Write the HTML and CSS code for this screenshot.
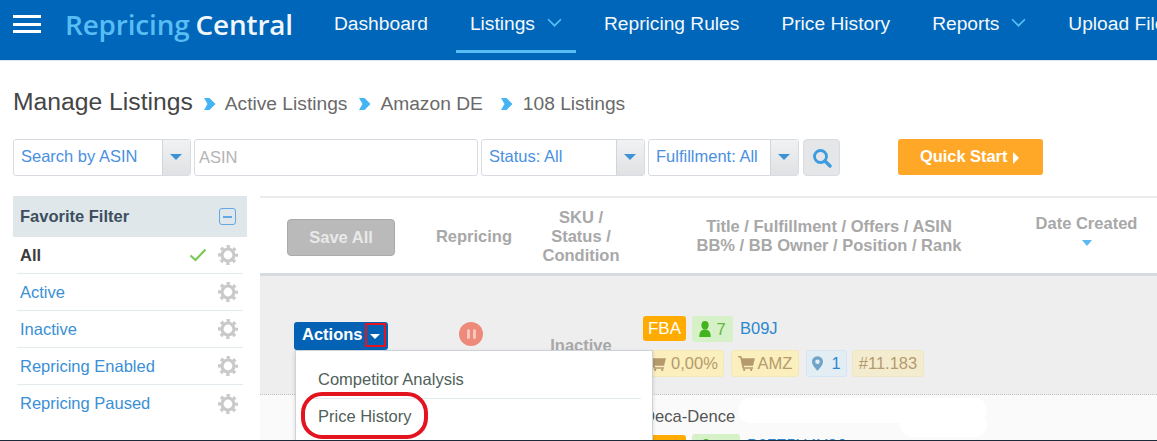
FILE: index.html
```html
<!DOCTYPE html>
<html lang="en">
<head>
<meta charset="utf-8">
<title>Manage Listings</title>
<link rel="stylesheet" href="styles.css">
</head>
<body>
<header class="topbar">
  <button class="burger" aria-label="Menu"><span></span><span></span><span></span></button>
  <div class="logo"><span class="logo-a">Repricing</span><span class="logo-b">Central</span></div>
  <nav class="nav">
    <a class="nav-item">Dashboard</a>
    <a class="nav-item active">Listings <svg class="chev" viewBox="0 0 14 9"><path d="M1 1l6 6 6-6" fill="none" stroke="#58bdf5" stroke-width="1.6"/></svg></a>
    <a class="nav-item">Repricing Rules</a>
    <a class="nav-item">Price History</a>
    <a class="nav-item">Reports <svg class="chev" viewBox="0 0 14 9"><path d="M1 1l6 6 6-6" fill="none" stroke="#58bdf5" stroke-width="1.6"/></svg></a>
    <a class="nav-item">Upload Files</a>
  </nav>
</header>

<section class="titlebar">
  <h1>Manage Listings</h1>
  <svg class="crumb" viewBox="0 0 12 12"><path d="M0.500 0h5.500l6 6-6 6H0.500l3.500-6z" fill="#45b4f5"/></svg><span>Active Listings</span>
  <svg class="crumb" viewBox="0 0 12 12"><path d="M0.500 0h5.500l6 6-6 6H0.500l3.500-6z" fill="#45b4f5"/></svg><span>Amazon DE</span>
  <svg class="crumb" viewBox="0 0 12 12"><path d="M0.500 0h5.500l6 6-6 6H0.500l3.500-6z" fill="#45b4f5"/></svg><span>108 Listings</span>
</section>

<section class="filters">
  <div class="select w-asin"><span class="select-label">Search by ASIN</span><span class="select-arrow"></span></div>
  <div class="text-input">ASIN</div>
  <div class="select w-status"><span class="select-label">Status: All</span><span class="select-arrow"></span></div>
  <div class="select w-ful"><span class="select-label">Fulfillment: All</span><span class="select-arrow"></span></div>
  <button class="search-btn" aria-label="Search"><svg viewBox="0 0 20 20" width="20" height="20"><circle cx="8.500" cy="8.500" r="6" fill="none" stroke="#3d9be0" stroke-width="2.800"/><path d="M13 13l5 5" stroke="#3d9be0" stroke-width="3.400" stroke-linecap="round"/></svg></button>
  <button class="quick">Quick Start <span class="tri"></span></button>
</section>

<main class="content">
  <aside class="side">
    <div class="side-head"><span>Favorite Filter</span><span class="collapse"><i></i></span></div>
    <ul class="side-list">
      <li class="current"><span class="side-name">All</span><svg class="check" viewBox="0 0 18 14"><path d="M1.500 7.500l5 4.500 10-10.500" fill="none" stroke="#7cc95a" stroke-width="2.200"/></svg><svg class="gear" viewBox="0 0 20 20"><use href="#gear"/></svg></li>
      <li><span class="side-name">Active</span><svg class="gear" viewBox="0 0 20 20"><use href="#gear"/></svg></li>
      <li><span class="side-name">Inactive</span><svg class="gear" viewBox="0 0 20 20"><use href="#gear"/></svg></li>
      <li><span class="side-name">Repricing Enabled</span><svg class="gear" viewBox="0 0 20 20"><use href="#gear"/></svg></li>
      <li><span class="side-name">Repricing Paused</span><svg class="gear" viewBox="0 0 20 20"><use href="#gear"/></svg></li>
    </ul>
  </aside>

  <section class="table">
    <div class="thead">
      <div class="th-save"><button class="save">Save All</button></div>
      <div class="th">Repricing</div>
      <div class="th">SKU /<br>Status /<br>Condition</div>
      <div class="th">Title / Fulfillment / Offers / ASIN<br>BB% / BB Owner / Position / Rank</div>
      <div class="th th-date">Date Created<span class="date-sort"></span></div>
    </div>

    <div class="row row-grey">
      <div class="cell-actions">
        <div class="actions"><span>Actions</span><span class="actions-caret"></span></div>
      </div>
      <div class="cell-pause"><span class="pause"><i></i><i></i></span></div>
      <div class="cell-status">Inactive</div>
      <div class="cell-info">
        <div class="badges">
          <span class="b b-fba">FBA</span>
          <span class="b b-green"><svg viewBox="0 0 12 16" width="12" height="16"><use href="#person"/></svg>7</span>
          <a class="asin">B09J</a>
        </div>
        <div class="badges second">
          <span class="b b-yellow b-bbp"><svg class="cart" viewBox="0 0 18 16"><use href="#cart"/></svg>0,00%</span>
          <span class="b b-yellow b-amz"><svg class="cart" viewBox="0 0 18 16"><use href="#cart"/></svg>AMZ</span>
          <span class="b b-blue"><svg viewBox="0 0 12 16" width="11" height="15"><path fill-rule="evenodd" d="M6 0a6 6 0 0 1 6 6c0 3.500-4 7.500-6 10C4 13.500 0 9.500 0 6a6 6 0 0 1 6-6zm0 3.500a2.500 2.500 0 1 0 0 5 2.500 2.500 0 0 0 0-5z" fill="#6fa3c7"/></svg>1</span>
          <span class="b b-rank">#11.183</span>
        </div>
      </div>
    </div>

    <div class="row row-white">
      <div class="cell-actions"></div>
      <div class="cell-pause"></div>
      <div class="cell-status"></div>
      <div class="cell-info">
        <div class="title-line">Deca-Dence<span class="blob"></span><span class="blob blob-low"></span></div>
        <div class="badges third">
          <span class="b b-fba b-fba-2">FBA</span>
          <span class="b b-green b-green-2"><svg viewBox="0 0 12 16" width="12" height="16"><use href="#person"/></svg></span>
          <a class="asin asin-cut">B07Z5H4Y3J</a>
        </div>
      </div>
    </div>

    <div class="menu">
      <a class="menu-item">Competitor Analysis</a>
      <a class="menu-item">Price History</a>
    </div>
    <span class="mark-rect"></span>
    <span class="mark-ring"></span>
  </section>
</main>

<svg class="defs" width="0" height="0" aria-hidden="true">
  <defs>
    <g id="gear" fill="none" stroke="#c9c9c9">
      <circle cx="10" cy="10" r="6" stroke-width="3.200"/>
      <circle cx="10" cy="10" r="8.500" stroke-width="3" stroke-dasharray="3.300 3.380" stroke-dashoffset="1.650"/>
    </g>
    <g id="cart" fill="#b59a6c">
      <path d="M0 0h3.500l.7 2.500H18l-2 8H6l.3 1.500H16v1.500H4.800L2.300 1.500H0z"/>
      <circle cx="6.500" cy="14.800" r="1.200"/><circle cx="14" cy="14.800" r="1.200"/>
    </g>
    <g id="person" fill="#41b31c">
      <ellipse cx="6" cy="4.200" rx="3.600" ry="4.200"/>
      <path d="M0.300 16c0-5.500 2-7.500 5.700-7.500s5.700 2 5.700 7.500z"/>
    </g>
  </defs>
</svg>
</body>
</html>
```
FILE: styles.css
```css
* { box-sizing: border-box; }
html, body { margin: 0; height: 441px; overflow: hidden; }
body { font-family: "Liberation Sans", Arial, sans-serif; color: #555; background: #fff; position: relative; }
body::after { content: ""; position: absolute; left: 0; right: 0; bottom: 0; height: 1px; background: #1d2a3a; z-index: 5; }
a { color: inherit; text-decoration: none; }
.defs { position: absolute; }

.topbar { height: 61px; background: #0066b9; display: flex; align-items: stretch; padding-left: 13px; white-space: nowrap; overflow: hidden; border-bottom: 1px solid #d8e8f5; }
.burger { width: 28px; height: 60px; padding: 15px 0 0; margin: 0; border: 0; background: none; display: flex; flex-direction: column; gap: 4.500px; flex: none; }
.burger span { display: block; width: 28px; height: 3px; background: #fff; }
.logo { width: 228px; margin-left: 24px; font-family: "Open Sans", sans-serif; font-size: 27.900px; font-weight: 600; line-height: 48px; flex: none; letter-spacing: -.15px; }
.logo-a { color: #58bdf5; margin-right: 6px; }
.logo-b { color: #f0f6fb; }
.nav { display: flex; margin-left: 27px; gap: 14px; flex: none; }
.nav-item { color: #f3f8fc; font-size: 19.200px; line-height: 48px; padding: 0 14px; height: 53px; display: flex; gap: 12px; align-items: flex-start; }
.nav-item.active { border-bottom: 3px solid #58bdf5; }
.chev { width: 15px; height: 10px; margin-top: 18px; }

.titlebar { display: flex; align-items: baseline; padding: 27px 0 0 13px; height: 78px; font-size: 19.200px; color: #6a6a6a; white-space: nowrap; }
.titlebar h1 { margin: 0; font-weight: 400; font-size: 24.700px; color: #454545; }
.crumb { width: 13px; height: 12px; margin: 0 9px 0 10px; }
.crumb:nth-of-type(2) { margin-left: 11px; }
.crumb:nth-of-type(3) { margin: 0 10px 0 17px; }

.filters { display: flex; height: 37px; padding-left: 13px; gap: 3px; align-items: stretch; }
.select { display: flex; border: 1px solid #d9dbe3; border-radius: 3px; overflow: hidden; background: #fff; }
.select-label { flex: 1; font-size: 16.500px; line-height: 33px; padding-left: 7px; color: #4a90e2; white-space: nowrap; }
.select-arrow { width: 28px; border-left: 1px solid #d2d4d9; background: linear-gradient(#f1f2f3, #dfe1e3); position: relative; }
.select-arrow::after { content: ""; position: absolute; left: 7px; top: 14px; border: 6px solid transparent; border-top: 6px solid #3d92d8; border-bottom: 0; }
.w-asin { width: 178px; }
.w-status { width: 164px; }
.w-ful { width: 151px; }
.text-input { width: 284px; border: 1px solid #d9dbe3; border-radius: 3px; font-size: 16.500px; line-height: 35px; padding-left: 4px; color: #b4b4b4; }
.search-btn { width: 37px; margin-left: 1px; padding: 0; border: 1px solid #d9dbe3; border-radius: 4px; background: #e4e6e8; display: flex; align-items: center; justify-content: center; }
.quick { width: 145px; margin-left: 55px; margin-bottom: 1px; border: 0; border-radius: 3px; background: #ffa726; color: #fff; font: bold 16.400px "Liberation Sans", Arial, sans-serif; padding: 0 2px 2px 0; }
.tri { display: inline-block; border: 5px solid transparent; border-left: 6px solid #fff; border-right: 0; border-top-width: 6px; border-bottom-width: 6px; vertical-align: -2px; margin-left: 1px; }

.content { display: flex; margin-top: 20px; padding-left: 13px; gap: 13px; }
.side { width: 234px; flex: none; }
.side-head { height: 41px; background: #e0e7eb; display: flex; justify-content: space-between; align-items: center; padding: 0 11px 0 7px; font-size: 16.500px; font-weight: 700; color: #3d4f5f; }
.collapse { width: 17px; height: 17px; border: 1.500px solid #62a8e6; border-radius: 3px; display: flex; align-items: center; justify-content: center; }
.collapse i { width: 9px; height: 2px; background: #62a8e6; }
.side-list { list-style: none; margin: 0; padding: 0 4px; width: 234px; }
.side-list li { height: 37px; display: flex; align-items: center; padding: 0 5px 0 3px; border-bottom: 1px solid #e3ebef; font-size: 16.500px; color: #3a8fd6; }
.side-list li:last-child { border-bottom: 0; }
.side-name { flex: 1; }
.current .side-name { font-weight: 700; color: #3c3c3c; }
.check { width: 18px; height: 14px; margin-right: 11px; }
.gear { width: 20px; height: 20px; overflow: visible; }

.table { flex: 1; position: relative; border-top: 2px solid #ececec; min-width: 0; }
.thead, .row { display: grid; grid-template-columns: 164px 100px 114px 382px 133px; }
.thead { height: 78px; align-items: center; border-bottom: 3px solid #d5dbe0; background: #fff; }
.th { text-align: center; font-size: 16.500px; font-weight: 700; color: #a8a8a8; line-height: 19px; padding-top: 1px; }
.th-date { margin-top: -12px; white-space: nowrap; }
.date-sort { display: block; width: 0; margin: 7px auto 0; border: 5px solid transparent; border-top: 6px solid #5db8f0; border-bottom: 0; }
.th-save { padding: 3px 0 0 27px; }
.save { width: 108px; height: 37px; border: 1px solid #aaa; border-radius: 4px; background: #bababa; color: #e9e9e9; font: bold 16.500px "Liberation Sans", Arial, sans-serif; padding: 0; }

.row-grey { height: 119px; background: #eeeeee; border-bottom: 1px dotted #c4c4c4; }
.row-white { height: 60px; background: #fafafa; }
.cell-actions { padding: 46px 0 0 34px; }
.actions { width: 94px; height: 28px; background: #0462b4; border-radius: 3px; color: #fff; font-size: 16.500px; font-weight: 700; display: flex; align-items: center; padding: 0 0 3px 8px; gap: 7px; }
.actions-caret { width: 0; border: 5px solid transparent; border-top: 5px solid #fff; border-bottom: 0; margin-top: 3px; }
.cell-pause { padding: 46px 0 0 35px; }
.pause { width: 24px; height: 24px; border-radius: 50%; background: #ee8a7a; display: flex; align-items: center; justify-content: center; gap: 3px; }
.pause i { width: 3px; height: 10px; background: #f7c6bd; border-radius: 2px; }
.cell-status { text-align: center; font-size: 16.500px; font-weight: 700; color: #a8a8a8; padding-top: 60px; }
.cell-info { padding: 40px 0 0 5px; font-size: 16.500px; white-space: nowrap; }
.badges { display: flex; align-items: center; height: 26px; gap: 7px; }
.second { margin-top: 8px; height: 27px; }
.b { display: inline-flex; align-items: center; justify-content: center; gap: 5px; height: 26px; padding: 0; border-radius: 3px; font-size: 16.500px; }
.b-fba { background: #ffab00; color: #fff; width: 43px; height: 25px; margin: -1px -1px 0 0; font-size: 17px; }
.b-green { background: #d6f0c8; color: #5fb83a; width: 41px; }
.second .b { height: 27px; border: 1px solid transparent; }
.b-yellow { background: #fbefbd; color: #b59a6c; }
.b-bbp { width: 81px; gap: 5px; }
.b-amz { width: 68px; gap: 3px; }
.b-blue { width: 41px; gap: 8px; background: #e2edf4; color: #2d87d0; }
.second .b-blue { border-color: #d6e5f5; }
.second .b-yellow { border-color: #f5e8b8; }
.b-rank { margin-left: -2px; background: #f4ecce; color: #b59a6c; width: 72px; }
.second .b-rank { border-color: #efe6c8; }
.cart { width: 17px; height: 15px; }
.asin { color: #2d87d0; margin-top: -2px; }
.title-line { color: #555; margin: 12px 0 0 0; font-size: 16.600px; position: relative; line-height: 19px; }
.blob { position: absolute; left: 95px; top: -9px; width: 249px; height: 25px; background: #fff; border-radius: 14px; }
.blob-low { left: 257px; top: 5px; width: 87px; height: 25px; }

.row-white .cell-info { padding-top: 0; }
.third { margin-top: 8px; }
.b-fba-2 { margin-top: 0; }
.b-green-2 { width: 48px; justify-content: flex-start; padding-left: 8px; }
.asin-cut { margin-top: -3px; }

.menu { position: absolute; left: 35px; top: 152px; width: 358px; height: 110px; background: #fff; border: 1px solid #cdd3d8; box-shadow: 0 2px 4px rgba(0,0,0,.15); padding: 11px 11px 0; display: block; }
.menu-item { display: block; height: 37px; font-size: 16.500px; line-height: 35px; color: #50605a; padding-left: 11px; border-bottom: 1px solid #e3ebef; }
.menu-item:last-child { border-bottom: 0; }
.mark-rect { position: absolute; left: 105px; top: 125px; width: 21px; height: 24px; border: 2px solid #e3141f; }
.mark-ring { position: absolute; left: 41px; top: 194px; width: 127px; height: 47px; border: 4px solid #e3141f; border-radius: 21px; }
```
